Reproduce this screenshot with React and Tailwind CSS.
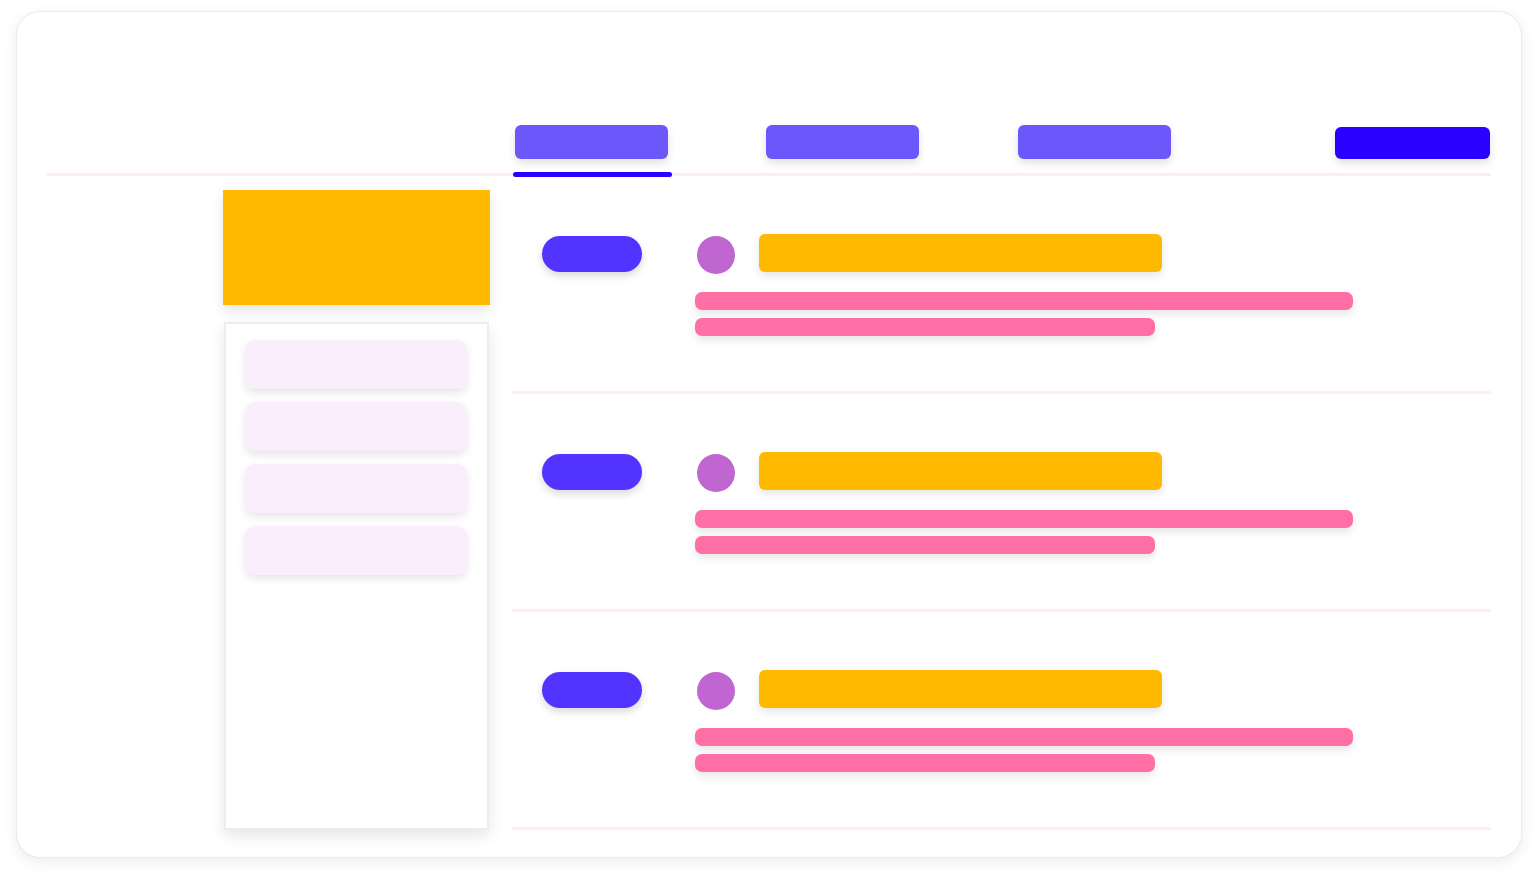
const tabs = [true, false, false];
const rows = [0, 1, 2];
const menuItems = [0, 1, 2, 3];

function Tab({ active }) {
  return (
    <div className="flex w-[159px] flex-col items-start">
      <div className="ml-[2px] h-[34px] w-[153px] rounded-[6px] bg-[#6c57fa] shadow-[0_4px_8px_rgba(0,0,0,0.12)]" />
      <div
        className={
          "relative mt-[13px] -mb-[4px] h-[5px] w-[159px] rounded-full " +
          (active ? "bg-[#2a00ff]" : "bg-transparent")
        }
      />
    </div>
  );
}

function Row() {
  return (
    <div className="flex h-[218px] border-b-[3px] border-[#fcecfc] pl-[30px] pt-[58px]">
      <div className="mt-[2px] h-[36px] w-[100px] rounded-full bg-[#5233ff] shadow-[0_4px_8px_rgba(0,0,0,0.15)]" />
      <div className="ml-[53px] flex flex-col">
        <div className="flex items-start">
          <div className="ml-[2px] mt-[2px] h-[38px] w-[38px] rounded-full bg-[#bf66d1]" />
          <div className="ml-[24px] h-[38px] w-[403px] rounded-[6px] bg-[#ffb900] shadow-[0_4px_8px_rgba(0,0,0,0.1)]" />
        </div>
        <div className="mt-[18px] h-[18px] w-[658px] rounded-[7px] bg-[#ff6ea5] shadow-[0_4px_8px_rgba(0,0,0,0.1)]" />
        <div className="mt-[8px] h-[18px] w-[460px] rounded-[7px] bg-[#ff6ea5] shadow-[0_4px_8px_rgba(0,0,0,0.1)]" />
      </div>
    </div>
  );
}

export default function App() {
  return (
    <div className="min-h-screen bg-white pl-[16px] pt-[11px]">
      <div className="h-[847px] w-[1506px] rounded-[24px] border border-[#e9e9f0] bg-white px-[30px] shadow-[0_4px_14px_rgba(0,0,0,0.08)]">
        <div className="grid grid-cols-[443px_979px] gap-x-[22px] border-b-[3px] border-[#fcecfc] pt-[113px]">
          <div />
          <div className="flex items-end pl-[1px]">
            <Tab active={tabs[0]} />
            <div className="ml-[92px]">
              <Tab active={tabs[1]} />
            </div>
            <div className="ml-[93px]">
              <Tab active={tabs[2]} />
            </div>
            <div className="mb-[14px] ml-auto mr-[1px] h-[32px] w-[155px] rounded-[6px] bg-[#2a00ff] shadow-[0_4px_8px_rgba(0,0,0,0.12)]" />
          </div>
        </div>

        <div className="grid grid-cols-[443px_979px] gap-x-[22px]">
          <div className="pl-[176px] pt-[14px]">
            <div className="h-[115px] w-[267px] bg-[#ffb900] shadow-[0_6px_12px_rgba(0,0,0,0.1)]" />
            <div className="ml-[1px] mt-[17px] flex h-[508px] w-[265px] flex-col gap-[13px] border-2 border-[#ececf2] bg-white px-[19px] pt-[16px] shadow-[0_6px_14px_rgba(0,0,0,0.1)]">
              {menuItems.map((i) => (
                <div
                  key={i}
                  className="h-[49px] w-[222px] rounded-[10px] bg-[#fbeefc] shadow-[0_4px_8px_rgba(0,0,0,0.1)]"
                />
              ))}
            </div>
          </div>
          <div className="flex flex-col">
            {rows.map((r) => (
              <Row key={r} />
            ))}
          </div>
        </div>
      </div>
    </div>
  );
}
